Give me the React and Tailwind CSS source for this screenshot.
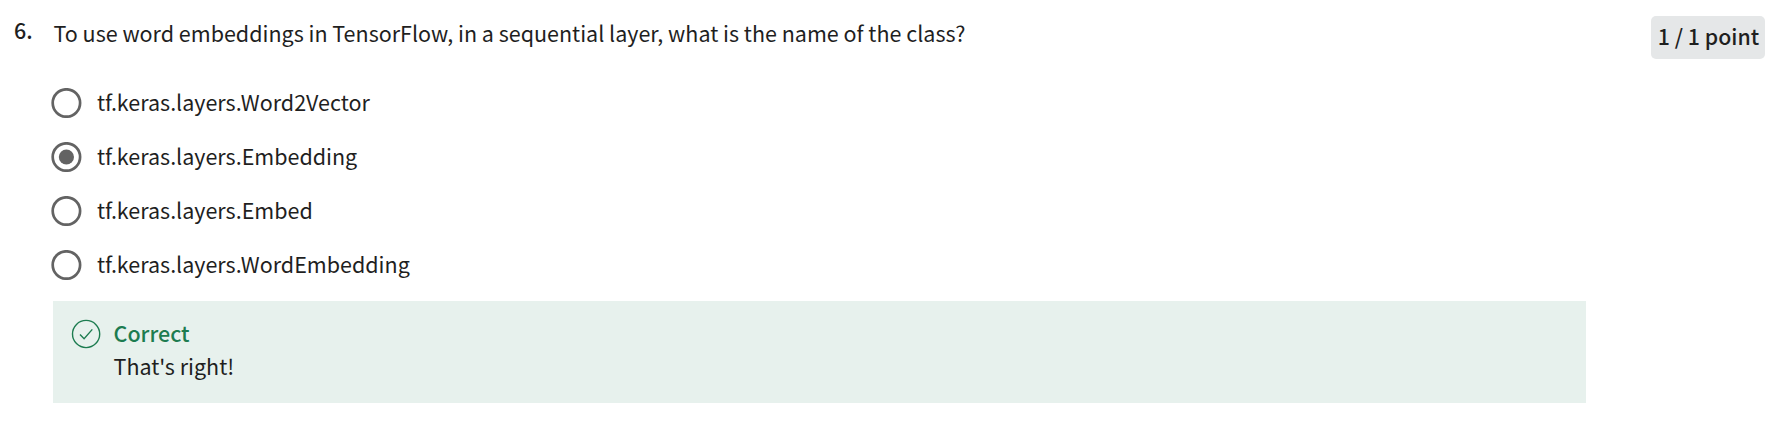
const options = [
  'tf.keras.layers.Word2Vector',
  'tf.keras.layers.Embedding',
  'tf.keras.layers.Embed',
  'tf.keras.layers.WordEmbedding',
];

function Radio({ checked }) {
  return (
    <svg className="block h-[30px] w-[31px] shrink-0" viewBox="0 0 31 30" fill="none">
      <circle cx="15.4" cy="15" r="13.7" stroke="#636363" strokeWidth="2.7" />
      {checked && <circle cx="15.4" cy="15" r="7.6" fill="#636363" />}
    </svg>
  );
}

export default function App() {
  return (
    <main className="flex h-[426px] w-full items-start bg-white pr-[18px] pl-[14px] font-['Noto_Sans_CJK_SC',sans-serif] text-[21.5px] leading-[34px] text-[#1f1f1f]">
      <div className="w-[39px] shrink-0 pt-[13px] font-medium">6.</div>
      <section className="flex w-[1533px] shrink-0 flex-col">
        <h1 className="pt-[16px] pl-[0.5px] font-normal tracking-[-0.005px]">
          To use word embeddings in TensorFlow, in a sequential layer, what is the name of the class?
        </h1>
        <ul className="mt-[26px] flex flex-col">
          {options.map((label, i) => (
            <li key={label} className="-ml-[2px] flex h-[54px] items-center gap-[15px]">
              <Radio checked={i === 1} />
              <span className="pb-[2px]">{label}</span>
            </li>
          ))}
        </ul>
        <div className="mt-[9px] flex h-[102px] gap-[12.5px] bg-[#e7f1ed] pt-[15px] pl-[18px]">
          <svg className="mt-[3px] block size-[30px] shrink-0" viewBox="0 0 30 30" fill="none" stroke="#1d7c50" strokeWidth="1.4">
            <circle cx="15.1" cy="15" r="13.6" />
            <path d="M9 15.4l4.1 4.3 8.2-9.3" />
          </svg>
          <div className="leading-[33px]">
            <p className="font-medium text-[#1d7c50]">Correct</p>
            <p>That's right!</p>
          </div>
        </div>
      </section>
      <div className="mt-[16px] ml-auto flex h-[43px] w-[114px] items-center justify-center rounded-[5px] bg-[#e5e7e8] pb-[3px] pl-px text-[21.3px] font-medium whitespace-nowrap">
        1 / 1 point
      </div>
    </main>
  );
}
